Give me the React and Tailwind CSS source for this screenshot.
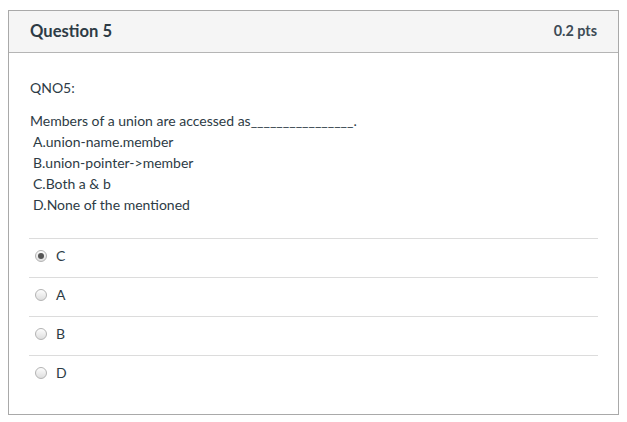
import React from 'react';

const answers = [
  { label: 'C', checked: true },
  { label: 'A', checked: false },
  { label: 'B', checked: false },
  { label: 'D', checked: false },
];

const Radio = ({ checked }) => (
  <span className="w-[12px] h-[12px] rounded-full border border-[#b3b3b3] bg-gradient-to-b from-[#fdfdfd] to-[#dedede] flex items-center justify-center shrink-0">
    {checked && <span className="w-[6px] h-[6px] rounded-full bg-[#555]" />}
  </span>
);

export default function App() {
  return (
    <div className="pl-[8px] pt-[10px] font-['Lato','Liberation_Sans',sans-serif] text-[#2d3b45]">
      <div className="w-[611px] h-[405px] border border-[#a9a9a9] bg-white">
        <div className="h-[42px] bg-[#f5f5f5] border-b border-[#b5b5b5] px-[21px] pb-[1px] flex items-center justify-between">
          <h2 className="text-[16.6px] font-bold">Question 5</h2>
          <span className="text-[14.4px] font-bold text-[#3d4b55]">0.2 pts</span>
        </div>

        <div className="px-[21px] pt-[24px] text-[14px] leading-[21px]">
          <p>QNO5:</p>
          <p className="mt-[12px]">Members of a union are accessed as________________.</p>
          <p className="pl-[3px]">A.union-name.member</p>
          <p className="pl-[3px]">B.union-pointer-&gt;member</p>
          <p className="pl-[3px]">C.Both a &amp; b</p>
          <p className="pl-[3px]">D.None of the mentioned</p>
        </div>

        <div className="mx-[20px] mt-[23px]">
          {answers.map((a, i) => (
            <div key={i} className="h-[39px] border-t border-[#dcdcdc] flex items-center gap-[9px] pl-[6px] pb-[5px] text-[14px]">
              <Radio checked={a.checked} />
              <span>{a.label}</span>
            </div>
          ))}
        </div>
      </div>
    </div>
  );
}
